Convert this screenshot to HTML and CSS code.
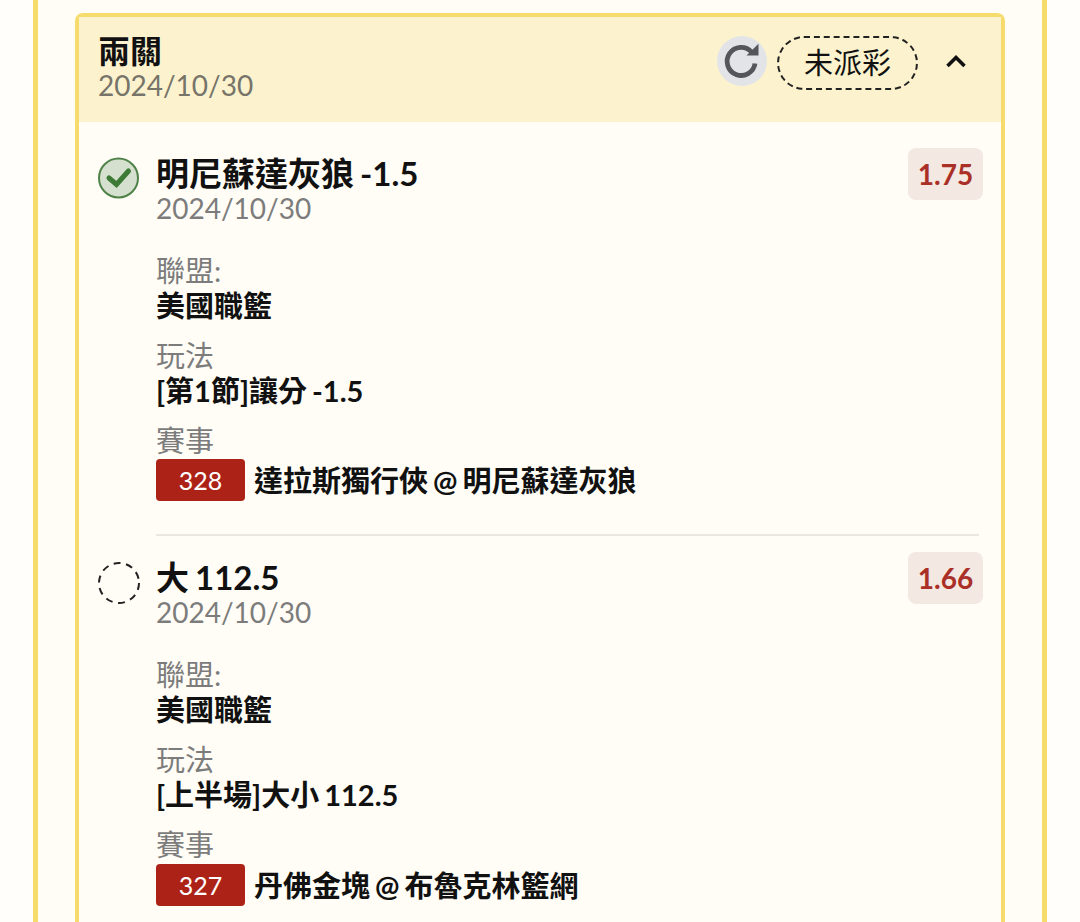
FILE: index.html
```html
<!DOCTYPE HTML>
<html lang="zh-Hant">
<head>
  <meta charset="UTF-8">
  <title>兩關</title>
  <link rel="stylesheet" href="styles.css">
</head>
<body>
  <div class="panel">
    <div class="card">
      <div class="card-head">
        <div class="card-title">
          <div class="title">兩關</div>
          <div class="date">2024/10/30</div>
        </div>
        <div class="card-actions">
          <div class="refresh">
            <svg width="38" height="38" viewBox="0 0 38 38">
              <path d="M28.5 10A14 14 0 1 0 32 21.5" fill="none" stroke="#55565b" stroke-width="4.8"/>
              <path d="M23.5 13.5H35.5V1.8Z" fill="#55565b"/>
            </svg>
          </div>
          <div class="status">未派彩</div>
          <svg class="chevron" width="20" height="14" viewBox="0 0 20 14">
            <path d="M1.5 12L10 3.5L18.5 12" fill="none" stroke="#111" stroke-width="3.6"/>
          </svg>
        </div>
      </div>

      <div class="leg">
        <div class="mark">
          <svg width="42" height="42" viewBox="0 0 42 42">
            <circle cx="21.5" cy="21" r="19.5" fill="#d5e0cf" stroke="#4f8248" stroke-width="2"/>
            <path d="M12 21L19.5 27.5L31.5 14" fill="none" stroke="#3d7a36" stroke-width="5" stroke-linecap="round"/>
          </svg>
        </div>
        <div class="leg-body">
          <div class="leg-top">
            <div>
              <div class="pick">明尼蘇達灰狼 -1.5</div>
              <div class="date date-sub">2024/10/30</div>
            </div>
            <div class="odds">1.75</div>
          </div>
          <div class="field">
            <div class="label">聯盟:</div>
            <div class="value">美國職籃</div>
          </div>
          <div class="field">
            <div class="label">玩法</div>
            <div class="value">[第1節]讓分 -1.5</div>
          </div>
          <div class="field">
            <div class="label">賽事</div>
            <div class="value game"><span class="game-no">328</span><span class="game-name">達拉斯獨行俠 @ 明尼蘇達灰狼</span></div>
          </div>
        </div>
      </div>

      <div class="leg leg-next">
        <div class="mark">
          <svg width="44" height="44" viewBox="0 0 44 44">
            <circle cx="22" cy="21" r="20" fill="none" stroke="#222" stroke-width="2" stroke-dasharray="7 5.6"/>
          </svg>
        </div>
        <div class="leg-body">
          <div class="leg-top">
            <div>
              <div class="pick">大 112.5</div>
              <div class="date date-sub">2024/10/30</div>
            </div>
            <div class="odds">1.66</div>
          </div>
          <div class="field">
            <div class="label">聯盟:</div>
            <div class="value">美國職籃</div>
          </div>
          <div class="field">
            <div class="label">玩法</div>
            <div class="value">[上半場]大小 112.5</div>
          </div>
          <div class="field">
            <div class="label">賽事</div>
            <div class="value game"><span class="game-no">327</span><span class="game-name">丹佛金塊 @ 布魯克林籃網</span></div>
          </div>
        </div>
      </div>
    </div>
  </div>
</body>
</html>
```

FILE: styles.css
```css
html, body {
    height: 922px;
    margin: 0;
    overflow: hidden;
}
body {
    background-color: #fffefa;
    color: #111;
    font-family: "Lato", "Noto Sans CJK TC", sans-serif;
}

/* outer panel */
.panel {
    background-color: #fffdf6;
    border-left: solid 5px #f5dc6c;
    border-right: solid 5px #f5dc6c;
    margin: 0 33px;
    padding: 13px 37px 0;
}

/* card */
.card {
    border: solid 4px #f5dc6c;
    border-bottom: 0;
    border-radius: 8px 8px 0 0;
}
.card-head {
    align-items: center;
    background-color: #fcf3ce;
    display: flex;
    height: 105px;
    padding: 0 35px 0 19px;
}
.card-title {
    flex: 1;
    padding-bottom: 3px;
}
.title {
    font-size: 32px;
    font-weight: 700;
    line-height: 34px;
}
.date {
    color: #77746a;
    font-size: 28px;
    line-height: 34px;
}
.date-sub {
    color: #7c7c7c;
}
.card-actions {
    align-items: center;
    display: flex;
    padding-bottom: 16px;
}
.refresh {
    align-items: center;
    background-color: #e2e4e8;
    border-radius: 50%;
    display: flex;
    height: 50px;
    justify-content: center;
    margin-bottom: 2px;
    margin-right: 10px;
    width: 50px;
}
.status {
    border: dashed 2px #222;
    border-radius: 27px;
    font-size: 29px;
    height: 50px;
    line-height: 50px;
    margin-right: 28px;
    margin-top: 2px;
    text-align: center;
    width: 137px;
}
.chevron {
    margin-bottom: 2px;
}

/* legs */
.leg {
    display: flex;
    padding: 25px 22px 0 18px;
}
.leg-next {
    padding-top: 0;
}
.mark {
    flex: none;
    height: 42px;
    margin-top: 10px;
    width: 42px;
}
.leg-next .mark {
    margin-top: 28px;
}
.leg-body {
    flex: 1;
    margin-left: 17px;
    padding-bottom: 33px;
}
.leg-next .leg-body {
    border-top: solid 2px #e8e7e2;
    padding-top: 16px;
}
.leg-top {
    display: flex;
    justify-content: space-between;
}
.pick {
    font-size: 33px;
    font-weight: 700;
    line-height: 36px;
    margin-top: 8px;
    word-spacing: -2px;
}
.leg-next .pick {
    margin-top: 7px;
}
.odds {
    background-color: #f3e8e2;
    border-radius: 8px;
    color: #a92f27;
    font-size: 28px;
    font-weight: 700;
    height: 52px;
    line-height: 52px;
    margin-right: -4px;
    margin-top: 1px;
    text-align: center;
    width: 75px;
}
.leg-next .odds {
    margin-top: 0;
}
.field {
    margin-top: 13px;
}
.leg-top + .field {
    margin-top: 27px;
}
.label {
    color: #7c7c7c;
    font-size: 29px;
    line-height: 38px;
    margin-bottom: -2px;
}
.value {
    font-size: 29px;
    font-weight: 700;
    line-height: 36px;
    word-spacing: -2px;
}
.game {
    align-items: center;
    display: flex;
    height: 42px;
    margin-top: 1px;
}
.leg-next .game {
    margin-top: 2px;
}
.game-no {
    background-color: #ad2217;
    border-radius: 4px;
    color: #fff;
    font-size: 25px;
    font-weight: 400;
    height: 42px;
    line-height: 42px;
    margin-right: 9px;
    text-align: center;
    width: 89px;
}
.game-name {
    margin-top: 2px;
}
```
